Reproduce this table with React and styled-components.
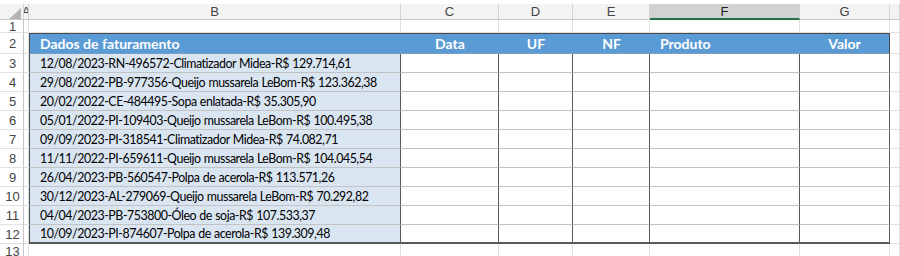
import React from "react"
import styled, { createGlobalStyle } from "styled-components"

const Global = createGlobalStyle`
  html, body { margin: 0; padding: 0; background: #ffffff; }
  body { font-family: Lato, "Noto Sans", "Liberation Sans", sans-serif; }
`

const COLS = ["A", "B", "C", "D", "E", "F", "G", ""]
const WIDTHS = "24px 5px 372px 98px 74px 77px 150px 90px 1fr"

const rows = [
  "12/08/2023-RN-496572-Climatizador Midea-R$ 129.714,61",
  "29/08/2022-PB-977356-Queijo mussarela LeBom-R$ 123.362,38",
  "20/02/2022-CE-484495-Sopa enlatada-R$ 35.305,90",
  "05/01/2022-PI-109403-Queijo mussarela LeBom-R$ 100.495,38",
  "09/09/2023-PI-318541-Climatizador Midea-R$ 74.082,71",
  "11/11/2022-PI-659611-Queijo mussarela LeBom-R$ 104.045,54",
  "26/04/2023-PB-560547-Polpa de acerola-R$ 113.571,26",
  "30/12/2023-AL-279069-Queijo mussarela LeBom-R$ 70.292,82",
  "04/04/2023-PB-753800-Óleo de soja-R$ 107.533,37",
  "10/09/2023-PI-874607-Polpa de acerola-R$ 139.309,48",
]

const headers = [
  { text: "Dados de faturamento", align: "left" },
  { text: "Data", align: "center" },
  { text: "UF", align: "center" },
  { text: "NF", align: "center" },
  { text: "Produto", align: "left" },
  { text: "Valor", align: "center" },
]

const S = {
  Sheet: styled.div`
    display: grid;
    grid-template-columns: ${WIDTHS};
    grid-template-rows: 16px 13px 21px repeat(10, 19px) 1fr;
    height: 252px;
    margin-top: 4px;
    width: 900px;
    overflow: hidden;
    color: #000;
  `,
  Corner: styled.div`
    background: #f3f3f3;
    border-right: 1px solid #d4d4d4;
    border-bottom: 1px solid #c6c6c6;
    svg { display: block; }
  `,
  ColHead: styled.div`
    background: ${p => (p.$selected ? "#d2d2d2" : "#f3f3f3")};
    border-right: 1px solid #d4d4d4;
    border-bottom: ${p => (p.$selected ? "2px solid #217346" : "1px solid #c6c6c6")};
    color: ${p => (p.$selected ? "#1f1f1f" : "#444")};
    font-family: "Liberation Sans", Arial, sans-serif;
    font-size: 13px;
    display: flex;
    align-items: center;
    justify-content: center;
    overflow: hidden;
    white-space: nowrap;
    line-height: 1;
  `,
  RowHead: styled.div`
    background: #ffffff;
    border-right: 1px solid #c6c6c6;
    border-bottom: 1px solid #e1e1e1;
    color: #444;
    font-family: "Liberation Sans", Arial, sans-serif;
    font-size: 13px;
    display: flex;
    align-items: center;
    justify-content: center;
    padding-left: 2px;
  `,
  Cell: styled.div`
    border-right: 1px solid #e1e1e1;
    border-bottom: 1px solid #e1e1e1;
    background: #fff;
  `,
  Head: styled.div`
    background: #5b9bd5;
    color: #fff;
    font-weight: 700;
    font-size: 14px;
    display: flex;
    align-items: center;
    justify-content: ${p => (p.$align === "center" ? "center" : "flex-start")};
    padding-left: ${p => (p.$align === "center" ? "0" : "10px")};
    border-top: 1.5px solid #4a4a4a;
    border-right: ${p => (p.$last ? "1.5px solid #4a4a4a" : "none")};
    border-left: ${p => (p.$first ? "1.5px solid #4a4a4a" : "none")};
    border-bottom: 1px solid #7a9ec0;
    white-space: nowrap;
  `,
  Data: styled.div`
    background: ${p => (p.$tinted ? "#dae5f2" : "#ffffff")};
    font-size: 12.4px;
    letter-spacing: -0.45px;
    word-spacing: 0.5px;
    display: flex;
    align-items: center;
    padding-left: 10px;
    white-space: nowrap;
    border-right: 1.5px solid #5a5a5a;
    border-left: ${p => (p.$first ? "1.5px solid #4a4a4a" : "none")};
    border-bottom: ${p => (p.$bottom ? "2px solid #5a5a5a" : "1.5px solid #c3c3c3")};
    box-shadow: ${p => (p.$bottom ? "0 1px 0 #cfcfcf" : "none")};
  `,
}

const CornerMark = () => (
  <svg width="24" height="16" viewBox="0 0 24 16">
    <polygon points="21,4 21,15 9,15" fill="#b5b5b5" />
  </svg>
)

export default function App() {
  return (
    <>
      <Global />
      <S.Sheet>
        <S.Corner><CornerMark /></S.Corner>
        {COLS.map((c, i) => (
          <S.ColHead key={i} $selected={c === "F"}>{c}</S.ColHead>
        ))}

        <S.RowHead>1</S.RowHead>
        {COLS.map((_, i) => <S.Cell key={i} />)}

        <S.RowHead>2</S.RowHead>
        <S.Cell />
        {headers.map((h, i) => (
          <S.Head key={i} $align={h.align} $first={i === 0} $last={i === headers.length - 1}>
            {h.text}
          </S.Head>
        ))}
        <S.Cell />

        {rows.map((r, ri) => (
          <React.Fragment key={ri}>
            <S.RowHead>{ri + 3}</S.RowHead>
            <S.Cell />
            <S.Data $tinted $first $bottom={ri === rows.length - 1}>{r}</S.Data>
            {[0, 1, 2, 3, 4].map(k => (
              <S.Data key={k} $bottom={ri === rows.length - 1} />
            ))}
            <S.Cell />
          </React.Fragment>
        ))}

        <S.RowHead>13</S.RowHead>
        {COLS.map((_, i) => <S.Cell key={i} />)}
      </S.Sheet>
    </>
  )
}
